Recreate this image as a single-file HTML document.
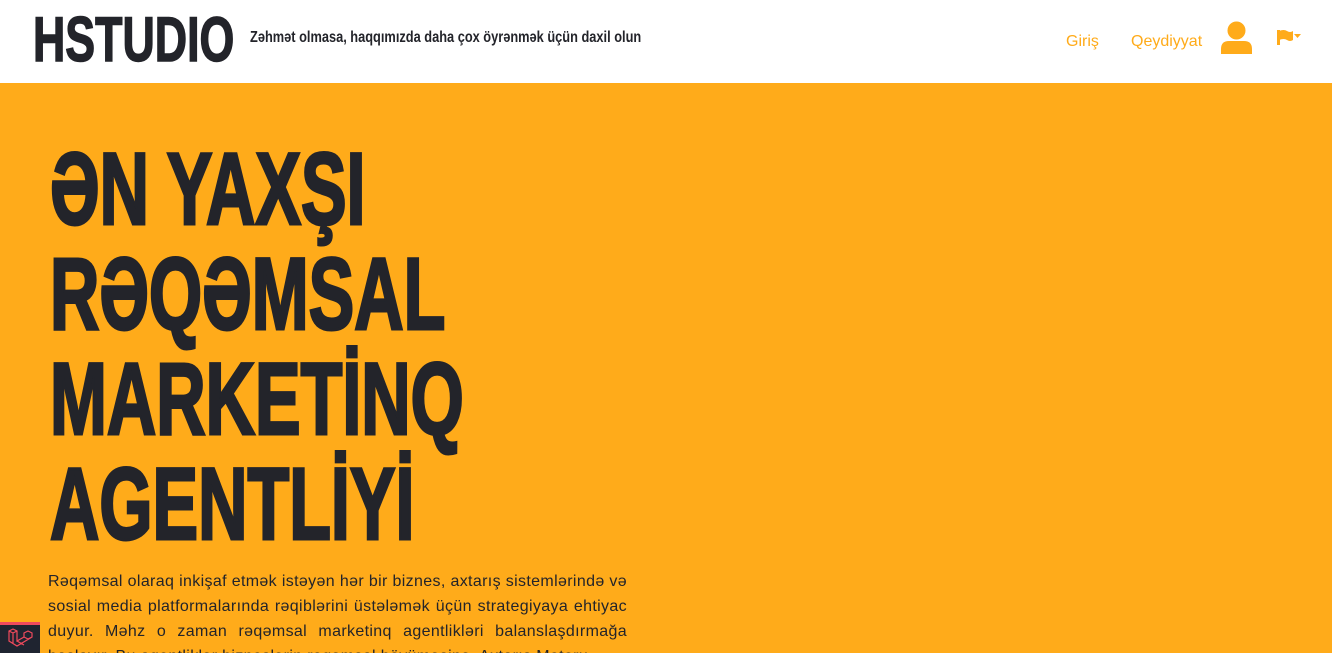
<!DOCTYPE html>
<html><head><meta charset="utf-8"><style>
*{margin:0;padding:0;box-sizing:border-box}
html,body{width:1332px;height:653px;overflow:hidden}
body{background:#FFAB1A;font-family:"Liberation Sans",sans-serif;position:relative}
.hdr{position:absolute;left:0;top:0;width:1332px;height:84px;background:#fff;border-bottom:1px solid #FFAB1A}
.logo{position:absolute;left:33px;top:4px;font-weight:bold;font-size:63px;line-height:72px;color:#23242a;transform:scaleX(0.71);transform-origin:left;white-space:nowrap;-webkit-text-stroke:1.5px #23242a}
.tag{position:absolute;left:250px;top:29px;font-weight:bold;font-size:16px;line-height:18px;color:#23242a;transform:scaleX(0.80);transform-origin:left;white-space:nowrap}
.nav{position:absolute;top:32px;font-size:16px;color:#FFAB1A;line-height:20px}
.h{position:absolute;left:50px;font-weight:bold;font-size:102px;line-height:105px;color:#23242a;transform:scaleX(0.67);transform-origin:left;white-space:nowrap;-webkit-text-stroke:3px #23242a}
.p{position:absolute;left:48px;top:569px;width:579px;font-size:16px;line-height:25px;color:#23242a;text-align:justify;letter-spacing:0.35px}
.lv{position:absolute;left:0;top:622px;width:40px;height:31px;background:#1f2430;border-top:3px solid #ef4a5c}
</style></head><body>
<div class="hdr">
<div class="logo">HSTUDIO</div>
<div class="tag">Zəhmət olmasa, haqqımızda daha çox öyrənmək üçün daxil olun</div>
<div class="nav" style="left:1066px">Giriş</div>
<div class="nav" style="left:1131px">Qeydiyyat</div>
<svg style="position:absolute;left:1220px;top:21px" width="33" height="33" viewBox="0 0 33 33"><circle cx="16.5" cy="9.5" r="9" fill="#FFAB1A"/><path d="M1 33 V28 Q1 20 9 20 H24 Q32 20 32 28 V33 Z" fill="#FFAB1A"/></svg>
<svg style="position:absolute;left:1276px;top:29px" width="26" height="18" viewBox="0 0 26 18"><rect x="1" y="1" width="3" height="15" fill="#FFAB1A"/><path d="M3 2 Q8 0 11 2 Q14 4 17 2 V11 Q14 13 11 11 Q8 9 3 11Z" fill="#FFAB1A"/><path d="M18 5 L25 5 L21.5 9Z" fill="#FFAB1A"/></svg>
</div>
<div class="h" style="top:137px">ƏN YAXŞI</div>
<div class="h" style="top:242px">RƏQƏMSAL</div>
<div class="h" style="top:347px">MARKETİNQ</div>
<div class="h" style="top:452px">AGENTLİYİ</div>
<div class="p">Rəqəmsal olaraq inkişaf etmək istəyən hər bir biznes, axtarış sistemlərində və sosial media platformalarında rəqiblərini üstələmək üçün strategiyaya ehtiyac duyur. Məhz o zaman rəqəmsal marketinq agentlikləri balanslaşdırmağa başlayır. Bu agentliklər bizneslərin rəqəmsal böyüməsinə. Axtarış Motoru</div>
<div class="lv"><svg width="40" height="28" viewBox="0 0 40 28"><path d="M9 6 L13 4 L17 6 V16 L24 12 V8 L28 6 L32 8 V12 L17 21 L9 16 Z M17 16 L24 20 M24 12 L28 14 L32 12 M9 6 L13 8 L17 6 M13 8 V18" fill="none" stroke="#ef4a5c" stroke-width="1.2"/></svg></div>
</body></html>
